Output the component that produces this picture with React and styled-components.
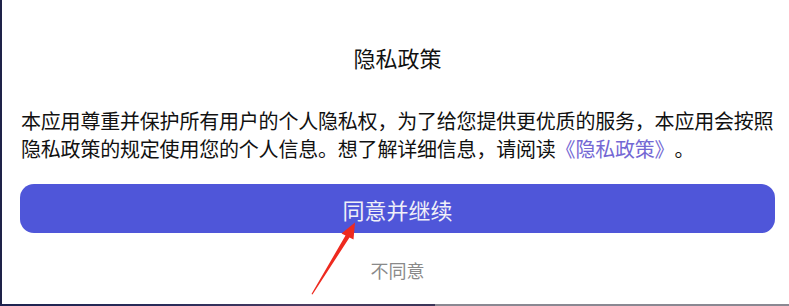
import styled, { createGlobalStyle } from "styled-components";

const GlobalStyle = createGlobalStyle`
  html, body {
    margin: 0;
    padding: 0;
    background: #1e2248;
  }
  body {
    font-family: "Noto Sans CJK SC", "Noto Sans", sans-serif;
    text-spacing-trim: space-all;
  }
`;

const Screen = styled.div`
  position: relative;
  display: flex;
  flex-direction: column;
  width: 789px;
  height: 306px;
  overflow: hidden;
`;

const Sheet = styled.main`
  flex: 1;
  display: flex;
  flex-direction: column;
  box-sizing: border-box;
  background: #ffffff;
  border-left: 2px solid #1e2248;
  padding: 42px 14px 0 18px;
`;

const Title = styled.h1`
  margin: 0;
  text-align: center;
  font-size: 22px;
  line-height: 30px;
  font-weight: 400;
  color: #111111;
`;

const Message = styled.p`
  margin: 35px -12px 0 1px;
  font-size: 20px;
  line-height: 28px;
  letter-spacing: -0.2px;
  color: #111111;
  text-spacing-trim: space-all;
`;

const PolicyLink = styled.a`
  color: #7468d4;
  text-decoration: none;
`;

const AgreeButton = styled.button`
  margin-top: 21px;
  height: 49px;
  border: none;
  border-radius: 14px;
  background: #4f56d9;
  color: #f0f0f8;
  font-family: inherit;
  font-size: 22px;
  cursor: pointer;
`;

const DeclineButton = styled.button`
  margin-top: 24px;
  align-self: center;
  border: none;
  background: transparent;
  padding: 0;
  color: #8a8a8a;
  font-family: inherit;
  font-size: 18px;
  line-height: 26px;
  cursor: pointer;
`;

const BottomStrip = styled.div`
  display: flex;
  height: 2px;
`;

const StripPart = styled.div`
  flex: ${(p) => p.$grow};
  background: ${(p) => p.$bg};
`;

const Arrow = styled.svg`
  position: absolute;
  left: 0;
  top: 0;
  pointer-events: none;
`;

export default function App() {
  return (
    <>
      <GlobalStyle />
      <Screen>
        <Sheet>
          <Title>隐私政策</Title>
          <Message>
            本应用尊重并保护所有用户的个人隐私权，为了给您提供更优质的服务，本应用会按照隐私政策的规定使用您的个人信息。想了解详细信息，请阅读
            <PolicyLink href="#">《隐私政策》</PolicyLink>。
          </Message>
          <AgreeButton>同意并继续</AgreeButton>
          <DeclineButton>不同意</DeclineButton>
        </Sheet>
        <BottomStrip>
          <StripPart
            $grow="435"
            $bg="linear-gradient(90deg, #1d2350 0%, #2a2c5a 40%, #4b3d62 70%, #3a3558 100%)"
          />
          <StripPart $grow="354" $bg="#8a8892" />
        </BottomStrip>
        <Arrow width="789" height="306" viewBox="0 0 789 306">
          <path
            d="M311.5 294 L345.5 235.5 L341.5 233.5 L355 222.5 L353.5 239.5 L349.5 237.5 L312.5 294.5 Z"
            fill="#ee2a1f"
          />
        </Arrow>
      </Screen>
    </>
  );
}
